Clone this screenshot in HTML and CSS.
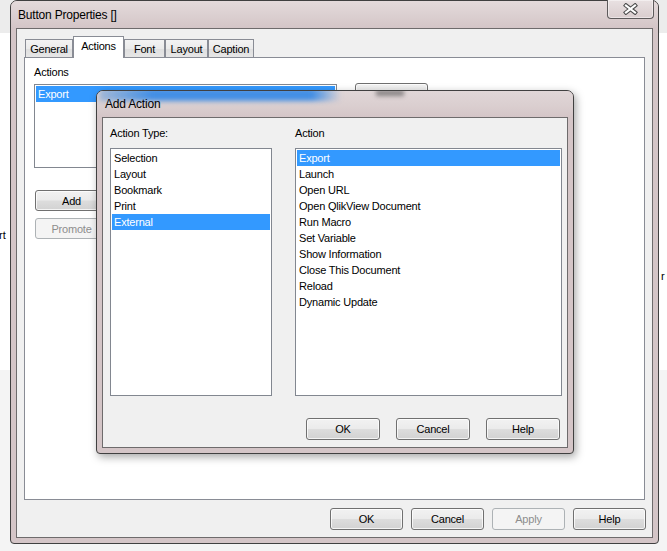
FILE: index.html
```html
<!DOCTYPE html>
<html>
<head>
<meta charset="utf-8">
<link rel="stylesheet" href="styles.css">
</head>
<body>
<span class="peek peek-left">rt</span>
<span class="peek peek-right">r</span>

<div class="window main-win">
  <div class="titlebar">
    <span class="title">Button Properties []</span>
    <div class="close">
      <svg width="15" height="12" viewBox="0 0 15 12">
        <path d="M3 2.5 L12 9.5 M12 2.5 L3 9.5" stroke="#4b4b4b" stroke-width="4.2" stroke-linecap="square" fill="none"/>
        <path d="M3 2.5 L12 9.5 M12 2.5 L3 9.5" stroke="#ffffff" stroke-width="2.2" stroke-linecap="square" fill="none"/>
      </svg>
    </div>
  </div>
  <div class="client main-client">
    <div class="tabs">
      <div class="tab tab-general">General</div>
      <div class="tab tab-actions active">Actions</div>
      <div class="tab tab-font">Font</div>
      <div class="tab tab-layout">Layout</div>
      <div class="tab tab-caption">Caption</div>
    </div>
    <div class="panel">
      <div class="label">Actions</div>
      <div class="actions-row">
        <div class="listbox actions-list">
          <div class="item sel">Export</div>
        </div>
        <div class="btn side-btn">Delete</div>
      </div>
      <div class="left-btns">
        <div class="btn">Add</div>
        <div class="btn disabled">Promote</div>
      </div>
    </div>
    <div class="footer">
      <div class="btn">OK</div>
      <div class="btn">Cancel</div>
      <div class="btn disabled">Apply</div>
      <div class="btn">Help</div>
    </div>
  </div>
</div>

<div class="window dialog">
  <div class="titlebar dlg-titlebar">
    <div class="glass"></div>
    <div class="smudge"></div>
    <span class="title">Add Action</span>
  </div>
  <div class="client dlg-client">
    <div class="columns">
      <div class="col col-left">
        <div class="label">Action Type:</div>
        <div class="listbox big-list">
          <div class="item">Selection</div>
          <div class="item">Layout</div>
          <div class="item">Bookmark</div>
          <div class="item">Print</div>
          <div class="item sel">External</div>
        </div>
      </div>
      <div class="col col-right">
        <div class="label">Action</div>
        <div class="listbox big-list">
          <div class="item sel">Export</div>
          <div class="item">Launch</div>
          <div class="item">Open URL</div>
          <div class="item">Open QlikView Document</div>
          <div class="item">Run Macro</div>
          <div class="item">Set Variable</div>
          <div class="item">Show Information</div>
          <div class="item">Close This Document</div>
          <div class="item">Reload</div>
          <div class="item">Dynamic Update</div>
        </div>
      </div>
    </div>
    <div class="dlg-footer">
      <div class="btn dbtn">OK</div>
      <div class="btn dbtn">Cancel</div>
      <div class="btn dbtn">Help</div>
    </div>
  </div>
</div>
</body>
</html>
```

FILE: styles.css
```css
* { box-sizing: border-box; }
html, body {
  margin: 0;
  padding: 0;
}
body {
  width: 667px;
  height: 551px;
  overflow: hidden;
  position: relative;
  font-family: "Liberation Sans", Arial, sans-serif;
  font-size: 11px;
  color: #000;
  background: linear-gradient(to bottom, #ececec 0, #ececec 33px, #ffffff 33px, #ffffff 370px, #f4f4f4 370px);
}

.peek {
  position: absolute;
  font-size: 11px;
  line-height: 13px;
}
.peek-left { left: -1px; top: 229px; }
.peek-right { left: 661px; top: 270px; }

/* ---------- windows ---------- */
.window {
  position: absolute;
  display: flex;
  flex-direction: column;
  border: 1px solid #404040;
  border-radius: 7px 7px 4px 4px;
  background: #d4c5c7;
  padding: 0 5px 5px 5px;
}
.main-win {
  left: 10px;
  top: 0;
  width: 649px;
  height: 544px;
}
.titlebar {
  position: relative;
  display: flex;
  align-items: center;
  height: 27px;
  margin: 0 -5px;
  padding-left: 7px;
  border-radius: 6px 6px 0 0;
  background: linear-gradient(to bottom, #e4dadb 0%, #dacecf 60%, #d4c5c7 100%);
}
.title {
  position: relative;
  font-size: 12px;
  letter-spacing: -0.2px;
  color: #000;
}
.close {
  margin-left: auto;
  margin-right: 4px;
  align-self: flex-start;
  margin-top: -1px;
  width: 47px;
  height: 19px;
  border: 1px solid #5d5a5b;
  border-top: none;
  border-radius: 0 0 4px 4px;
  background: linear-gradient(to bottom, #e9e1e2, #d9cdce);
  box-shadow: inset 0 0 0 1px rgba(255,255,255,0.45);
  display: flex;
  align-items: center;
  justify-content: center;
  padding-bottom: 1px;
}
.close svg { display: block; }

.client {
  flex: 1;
  display: flex;
  flex-direction: column;
  border: 1px solid #6e6b6c;
  background: #f0f0f0;
}
.main-client {
  padding: 7px 7px 7px 7px;
}

/* ---------- tabs ---------- */
.tabs {
  display: flex;
  align-items: flex-end;
  height: 21px;
  padding-left: 1px;
  position: relative;
  z-index: 1;
}
.tab {
  height: 18px;
  border: 1px solid #898c95;
  border-bottom: none;
  background: linear-gradient(to bottom, #f3f3f3 0%, #ebebeb 50%, #dfdfdf 51%, #e6e6e6 100%);
  display: flex;
  align-items: center;
  justify-content: center;
  letter-spacing: -0.2px;
  padding-top: 1px;
}
.tab.active {
  height: 22px;
  margin-bottom: -1px;
  background: #ffffff;
  padding-bottom: 4px;
}
.tab-general { width: 48px; }
.tab-actions { width: 51px; }
.tab-font { width: 41px; }
.tab-layout { width: 43px; }
.tab-caption { width: 46px; }

.panel {
  flex: 1;
  background: #ffffff;
  border: 1px solid #898c95;
  padding: 8px 9px;
}
.label {
  line-height: 13px;
  height: 13px;
  letter-spacing: -0.2px;
}
.actions-row {
  display: flex;
  align-items: flex-start;
  margin-top: 5px;
}
.listbox {
  background: #ffffff;
  border: 1px solid #828790;
  padding: 1px;
}
.actions-list {
  width: 303px;
  height: 84px;
}
.item {
  height: 16px;
  line-height: 16px;
  padding-left: 2px;
  white-space: nowrap;
  letter-spacing: -0.2px;
}
.item.sel {
  background: #3399ff;
  color: #ffffff;
}
.side-btn {
  margin-left: 18px;
  margin-top: -1px;
}
.left-btns {
  display: flex;
  flex-direction: column;
  gap: 7px;
  margin-top: 22px;
  margin-left: 1px;
}
.left-btns .btn { height: 21px; }

/* ---------- buttons ---------- */
.btn {
  width: 73px;
  height: 22px;
  border: 1px solid #707070;
  border-radius: 3px;
  background: linear-gradient(to bottom, #f2f2f2 0%, #ebebeb 48%, #dddddd 52%, #d2d2d2 100%);
  box-shadow: inset 0 0 0 1px rgba(255,255,255,0.75);
  display: flex;
  align-items: center;
  justify-content: center;
  letter-spacing: -0.2px;
  flex: none;
}
.btn.disabled {
  border-color: #adb2b5;
  background: #f4f4f4;
  box-shadow: none;
  color: #8d8d8d;
}
.footer {
  display: flex;
  justify-content: flex-end;
  gap: 8px;
  margin-top: 8px;
  margin-right: -1px;
}

/* ---------- dialog ---------- */
.dialog {
  left: 96px;
  top: 90px;
  width: 478px;
  height: 364px;
  box-shadow: 2px 3px 9px rgba(0,0,0,0.35);
  z-index: 5;
}
.dlg-titlebar {
  height: 26px;
  padding-left: 8px;
  overflow: hidden;
  background: linear-gradient(to bottom, #e0d6d7 0%, #dacecf 60%, #d4c5c7 100%);
}
.glass {
  position: absolute;
  left: 2px;
  top: -3px;
  width: 242px;
  height: 13px;
  background: linear-gradient(to right, rgba(90,150,215,0.45) 0%, rgba(50,135,230,0.9) 22%, rgba(50,135,230,0.9) 88%, rgba(50,135,230,0) 100%);
  filter: blur(2.5px);
}
.smudge {
  position: absolute;
  left: 279px;
  top: -1px;
  width: 28px;
  height: 6px;
  background: rgba(70,70,70,0.55);
  filter: blur(2px);
}
.dlg-client {
  padding: 9px 5px 7px 7px;
}
.columns {
  display: flex;
  gap: 23px;
}
.col-left { width: 162px; }
.col-right { width: 267px; }
.big-list {
  margin-top: 8px;
  height: 248px;
}
.dlg-footer {
  display: flex;
  justify-content: flex-end;
  gap: 16px;
  margin-top: 22px;
  margin-right: 2px;
}
.dbtn { width: 74px; }
```
